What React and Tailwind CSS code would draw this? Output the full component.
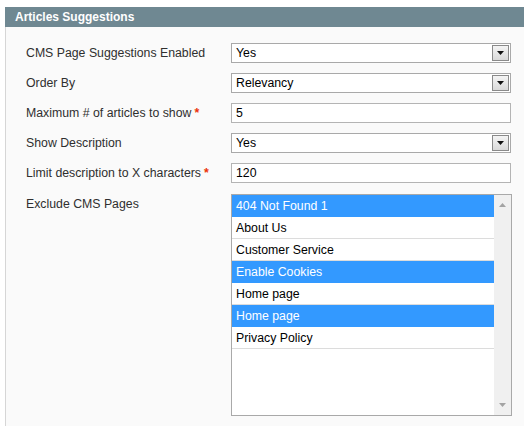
import React from 'react';

const font = { fontFamily: '"Liberation Sans", Arial, sans-serif' };

const Arrow = () => (
  <div className="absolute right-[1px] top-[1px] w-[17px] h-[16px] border border-[#8a8a8a] bg-gradient-to-b from-[#f4f4f4] to-[#d9d9d9] flex items-center justify-center">
    <svg width="7" height="4" viewBox="0 0 7 4">
      <path d="M0 0H7L3.5 4Z" fill="#111" />
    </svg>
  </div>
);

const Select = ({ value }) => (
  <div className="relative w-[280px] h-[20px] border border-[#a9a9a9] bg-white text-[12.3px] leading-[19px] pl-[4px] text-black">
    {value}
    <Arrow />
  </div>
);

const Input = ({ value }) => (
  <div className="w-[280px] h-[20px] border border-[#b4b4b4] bg-white text-[12.3px] leading-[19px] pl-[4px] text-black">
    {value}
  </div>
);

const Req = () => <span className="text-[#eb340a] font-bold ml-[3px]">*</span>;

const Row = ({ label, children, req }) => (
  <div className="flex h-[20px] mb-[10px]">
    <div className="w-[205px] text-[12.3px] leading-[20px] text-[#2f2f2f]">
      {label}
      {req && <Req />}
    </div>
    {children}
  </div>
);

const pages = [
  ['404 Not Found 1', true],
  ['About Us', false],
  ['Customer Service', false],
  ['Enable Cookies', true],
  ['Home page', false],
  ['Home page', true],
  ['Privacy Policy', false],
];

export default function App() {
  return (
    <div className="w-[524px] h-[426px] bg-white pt-[7px] pl-[5px] overflow-hidden" style={font}>
      <div className="h-[20px] bg-[#6f8892] text-white font-bold text-[12px] leading-[20px] pl-[10px]">
        Articles Suggestions
      </div>
      <div className="h-[400px] border-l border-[#d6d6d6] bg-[#fafafa] pt-[16px] pl-[20px]">
        <Row label="CMS Page Suggestions Enabled"><Select value="Yes" /></Row>
        <Row label="Order By"><Select value="Relevancy" /></Row>
        <Row label="Maximum # of articles to show" req><Input value="5" /></Row>
        <Row label="Show Description"><Select value="Yes" /></Row>
        <Row label="Limit description to X characters" req><Input value="120" /></Row>
        <div className="flex pt-[1px]">
          <div className="w-[205px] text-[12.3px] leading-[20px] text-[#2f2f2f]">Exclude CMS Pages</div>
          <div className="w-[281px] h-[222px] border border-[#a9a9a9] bg-white flex">
            <div className="flex-1">
              {pages.map(([name, sel], i) => (
                <div
                  key={i}
                  className={`h-[22px] text-[12.3px] leading-[22px] pl-[4px] border-b ${
                    sel ? 'bg-[#3399ff] text-white border-[#3399ff]' : 'text-black border-[#dcdcdc]'
                  }`}
                >
                  {name}
                </div>
              ))}
            </div>
            <div className="w-[17px] bg-[#f0f0f0] flex flex-col justify-between items-center py-[8px]">
              <svg width="7" height="4" viewBox="0 0 7 4"><path d="M0 4H7L3.5 0Z" fill="#a3a3a3" /></svg>
              <svg width="7" height="4" viewBox="0 0 7 4"><path d="M0 0H7L3.5 4Z" fill="#a3a3a3" /></svg>
            </div>
          </div>
        </div>
      </div>
    </div>
  );
}
